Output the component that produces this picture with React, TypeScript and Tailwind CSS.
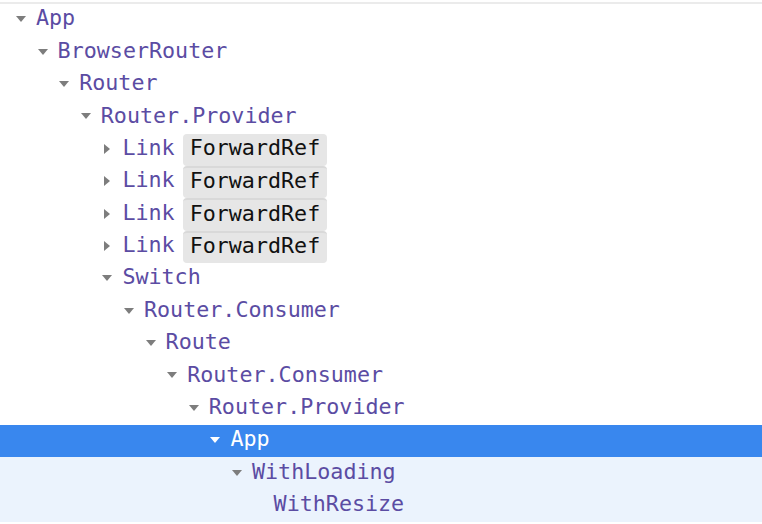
import React from "react";

type Row = { name: string; level: number; arrow: "down" | "right" | "none"; badge?: string };

const rows: Row[] = [
  { name: "App", level: 0, arrow: "down" },
  { name: "BrowserRouter", level: 1, arrow: "down" },
  { name: "Router", level: 2, arrow: "down" },
  { name: "Router.Provider", level: 3, arrow: "down" },
  { name: "Link", level: 4, arrow: "right", badge: "ForwardRef" },
  { name: "Link", level: 4, arrow: "right", badge: "ForwardRef" },
  { name: "Link", level: 4, arrow: "right", badge: "ForwardRef" },
  { name: "Link", level: 4, arrow: "right", badge: "ForwardRef" },
  { name: "Switch", level: 4, arrow: "down" },
  { name: "Router.Consumer", level: 5, arrow: "down" },
  { name: "Route", level: 6, arrow: "down" },
  { name: "Router.Consumer", level: 7, arrow: "down" },
  { name: "Router.Provider", level: 8, arrow: "down" },
  { name: "App", level: 9, arrow: "down" },
  { name: "WithLoading", level: 10, arrow: "down" },
  { name: "WithResize", level: 11, arrow: "none" },
];

const SELECTED = 13;

function Arrow({ dir, selected }: { dir: "down" | "right" | "none"; selected: boolean }) {
  const color = selected ? "#ffffff" : "#7d7d7d";
  return (
    <div className="w-[20px] h-full flex items-center shrink-0 -translate-y-[1px]">
      {dir === "down" && (
        <svg width="10" height="6" viewBox="0 0 10 6">
          <path d="M0 0 L10 0 L5 6 Z" fill={color} />
        </svg>
      )}
      {dir === "right" && (
        <svg width="6" height="10" viewBox="0 0 6 10" className="ml-[2px]">
          <path d="M0 0 L6 5 L0 10 Z" fill={color} />
        </svg>
      )}
    </div>
  );
}

export default function App() {
  return (
    <div
      className="w-[762px] h-[524px] bg-white overflow-hidden"
      style={{ fontFamily: '"DejaVu Sans Mono", "Liberation Mono", monospace' }}
    >
      <div className="h-[2px] bg-white" />
      <div className="h-[2px] bg-[#ebebeb]" />
      <div className="flex flex-col text-[21.7px] leading-none">
        {rows.map((r, i) => {
          const selected = i === SELECTED;
          const afterSel = i > SELECTED;
          const bg = selected ? "bg-[#3987ee]" : afterSel ? "bg-[#ebf3fd]" : "bg-white";
          const prevBadge = i > 0 && rows[i - 1].badge;
          return (
            <div
              key={i}
              className={`h-[32.4px] flex items-center ${bg}`}
              style={{ paddingLeft: 16 + r.level * 21.6 }}
            >
              <Arrow dir={r.arrow} selected={selected} />
              <span
                className={`-translate-y-[2px] ${selected ? "text-white" : "text-[#5b4ca3]"}`}
              >
                {r.name}
              </span>
              {r.badge && (
                <div
                  className={`ml-[8px] h-full flex items-center px-[7px] bg-[#e6e6e6] text-[#111111] rounded-[4px] ${
                    prevBadge ? "border-t-2 border-[#d9d9d9]" : ""
                  }`}
                >
                  <span className="-translate-y-[2px]">{r.badge}</span>
                </div>
              )}
            </div>
          );
        })}
        <div className="flex-1 h-[40px] bg-[#ebf3fd]" />
      </div>
    </div>
  );
}
